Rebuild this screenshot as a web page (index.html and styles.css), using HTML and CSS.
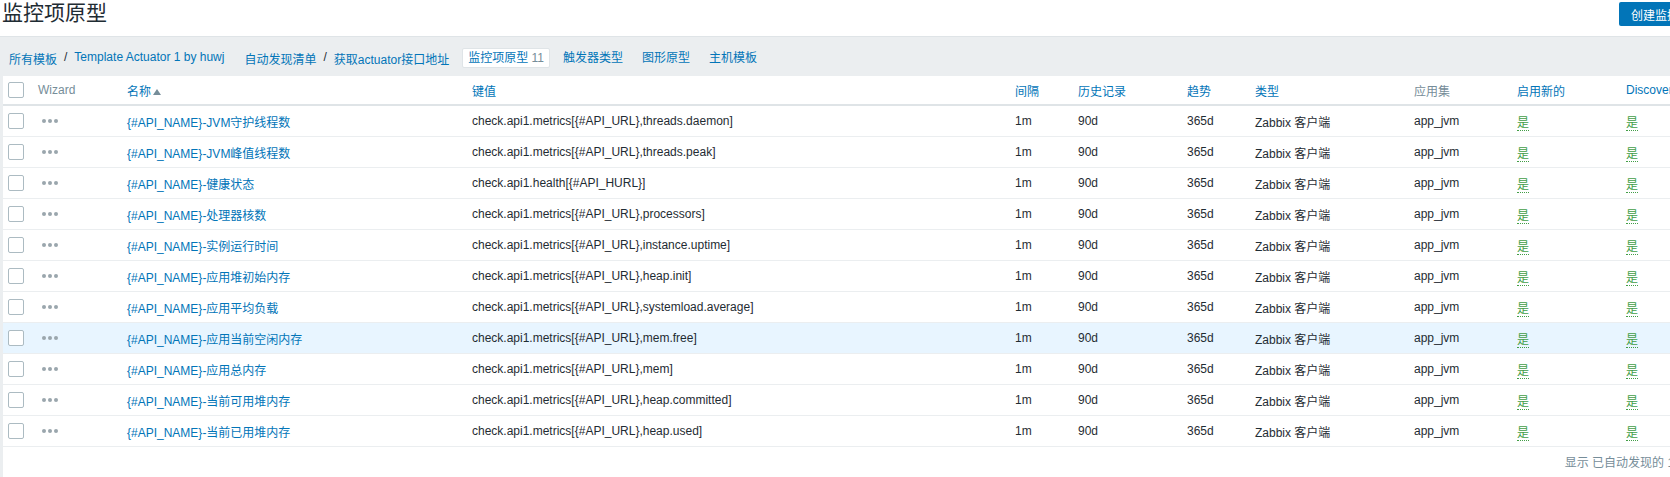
FILE: index.html
```html
<!DOCTYPE html>
<html lang="zh-CN">
  <head>
    <meta charset="utf-8" />
    <title>监控项原型</title>
    <link rel="stylesheet" href="styles.css">
  </head>
  <body>
    <div class="page">
      <div class="header">
        <h1>监控项原型</h1>
        <button class="btn-create">创建监控项原型</button>
      </div>

      <div class="content">
        <div class="nav-bar">
          <div class="crumbs">
            <a href="#">所有模板</a>
            <span class="sep">/</span>
            <a href="#">Template Actuator 1 by huwj</a>
          </div>
          <div class="crumbs">
            <a href="#">自动发现清单</a>
            <span class="sep">/</span>
            <a href="#">获取actuator接口地址</a>
          </div>
          <div class="tabs">
            <span class="tab selected">监控项原型 <span class="count">11</span></span>
            <a class="tab" href="#">触发器类型</a>
            <a class="tab" href="#">图形原型</a>
            <a class="tab" href="#">主机模板</a>
          </div>
        </div>

        <div class="panel">
          <table class="list">
            <colgroup>
              <col style="width: 30px">
              <col style="width: 89px">
              <col style="width: 345px">
              <col style="width: 543px">
              <col style="width: 63px">
              <col style="width: 109px">
              <col style="width: 68px">
              <col style="width: 159px">
              <col style="width: 103px">
              <col style="width: 109px">
              <col style="width: 120px">
            </colgroup>
            <thead>
              <tr>
                <th><span class="checkbox"></span></th>
                <th class="plain">Wizard</th>
                <th><a href="#">名称</a><span class="arrow-up"></span></th>
                <th><a href="#">键值</a></th>
                <th><a href="#">间隔</a></th>
                <th><a href="#">历史记录</a></th>
                <th><a href="#">趋势</a></th>
                <th><a href="#">类型</a></th>
                <th class="plain">应用集</th>
                <th><a href="#">启用新的</a></th>
                <th><a href="#">Discover</a></th>
              </tr>
            </thead>
            <tbody>
              <tr>
                <td><span class="checkbox"></span></td>
                <td><span class="dots"><i></i><i></i><i></i></span></td>
                <td><a href="#">{#API_NAME}-JVM守护线程数</a></td>
                <td>check.api1.metrics[{#API_URL},threads.daemon]</td>
                <td>1m</td><td>90d</td><td>365d</td><td>Zabbix 客户端</td><td>app_jvm</td>
                <td><a class="yes" href="#">是</a></td><td><a class="yes" href="#">是</a></td>
              </tr>
              <tr>
                <td><span class="checkbox"></span></td>
                <td><span class="dots"><i></i><i></i><i></i></span></td>
                <td><a href="#">{#API_NAME}-JVM峰值线程数</a></td>
                <td>check.api1.metrics[{#API_URL},threads.peak]</td>
                <td>1m</td><td>90d</td><td>365d</td><td>Zabbix 客户端</td><td>app_jvm</td>
                <td><a class="yes" href="#">是</a></td><td><a class="yes" href="#">是</a></td>
              </tr>
              <tr>
                <td><span class="checkbox"></span></td>
                <td><span class="dots"><i></i><i></i><i></i></span></td>
                <td><a href="#">{#API_NAME}-健康状态</a></td>
                <td>check.api1.health[{#API_HURL}]</td>
                <td>1m</td><td>90d</td><td>365d</td><td>Zabbix 客户端</td><td>app_jvm</td>
                <td><a class="yes" href="#">是</a></td><td><a class="yes" href="#">是</a></td>
              </tr>
              <tr>
                <td><span class="checkbox"></span></td>
                <td><span class="dots"><i></i><i></i><i></i></span></td>
                <td><a href="#">{#API_NAME}-处理器核数</a></td>
                <td>check.api1.metrics[{#API_URL},processors]</td>
                <td>1m</td><td>90d</td><td>365d</td><td>Zabbix 客户端</td><td>app_jvm</td>
                <td><a class="yes" href="#">是</a></td><td><a class="yes" href="#">是</a></td>
              </tr>
              <tr>
                <td><span class="checkbox"></span></td>
                <td><span class="dots"><i></i><i></i><i></i></span></td>
                <td><a href="#">{#API_NAME}-实例运行时间</a></td>
                <td>check.api1.metrics[{#API_URL},instance.uptime]</td>
                <td>1m</td><td>90d</td><td>365d</td><td>Zabbix 客户端</td><td>app_jvm</td>
                <td><a class="yes" href="#">是</a></td><td><a class="yes" href="#">是</a></td>
              </tr>
              <tr>
                <td><span class="checkbox"></span></td>
                <td><span class="dots"><i></i><i></i><i></i></span></td>
                <td><a href="#">{#API_NAME}-应用堆初始内存</a></td>
                <td>check.api1.metrics[{#API_URL},heap.init]</td>
                <td>1m</td><td>90d</td><td>365d</td><td>Zabbix 客户端</td><td>app_jvm</td>
                <td><a class="yes" href="#">是</a></td><td><a class="yes" href="#">是</a></td>
              </tr>
              <tr>
                <td><span class="checkbox"></span></td>
                <td><span class="dots"><i></i><i></i><i></i></span></td>
                <td><a href="#">{#API_NAME}-应用平均负载</a></td>
                <td>check.api1.metrics[{#API_URL},systemload.average]</td>
                <td>1m</td><td>90d</td><td>365d</td><td>Zabbix 客户端</td><td>app_jvm</td>
                <td><a class="yes" href="#">是</a></td><td><a class="yes" href="#">是</a></td>
              </tr>
              <tr class="hover">
                <td><span class="checkbox"></span></td>
                <td><span class="dots"><i></i><i></i><i></i></span></td>
                <td><a href="#">{#API_NAME}-应用当前空闲内存</a></td>
                <td>check.api1.metrics[{#API_URL},mem.free]</td>
                <td>1m</td><td>90d</td><td>365d</td><td>Zabbix 客户端</td><td>app_jvm</td>
                <td><a class="yes" href="#">是</a></td><td><a class="yes" href="#">是</a></td>
              </tr>
              <tr>
                <td><span class="checkbox"></span></td>
                <td><span class="dots"><i></i><i></i><i></i></span></td>
                <td><a href="#">{#API_NAME}-应用总内存</a></td>
                <td>check.api1.metrics[{#API_URL},mem]</td>
                <td>1m</td><td>90d</td><td>365d</td><td>Zabbix 客户端</td><td>app_jvm</td>
                <td><a class="yes" href="#">是</a></td><td><a class="yes" href="#">是</a></td>
              </tr>
              <tr>
                <td><span class="checkbox"></span></td>
                <td><span class="dots"><i></i><i></i><i></i></span></td>
                <td><a href="#">{#API_NAME}-当前可用堆内存</a></td>
                <td>check.api1.metrics[{#API_URL},heap.committed]</td>
                <td>1m</td><td>90d</td><td>365d</td><td>Zabbix 客户端</td><td>app_jvm</td>
                <td><a class="yes" href="#">是</a></td><td><a class="yes" href="#">是</a></td>
              </tr>
              <tr>
                <td><span class="checkbox"></span></td>
                <td><span class="dots"><i></i><i></i><i></i></span></td>
                <td><a href="#">{#API_NAME}-当前已用堆内存</a></td>
                <td>check.api1.metrics[{#API_URL},heap.used]</td>
                <td>1m</td><td>90d</td><td>365d</td><td>Zabbix 客户端</td><td>app_jvm</td>
                <td><a class="yes" href="#">是</a></td><td><a class="yes" href="#">是</a></td>
              </tr>
            </tbody>
          </table>
          <div class="paging">显示 已自动发现的 11 中的 11</div>
        </div>
      </div>
    </div>
  </body>
</html>
```

FILE: styles.css
```css
html,
body {
  margin: 0;
  overflow: hidden;
}

body {
  font-family: "Liberation Sans", Arial, "Noto Sans CJK SC", sans-serif;
  font-size: 12px;
  color: #1f2c33;
  background-color: #fff;
}

a {
  color: #0275b8;
  text-decoration: none;
}

.page {
  width: 1741px;
}

.header {
  display: flex;
  justify-content: space-between;
  align-items: flex-start;
  height: 36px;
  padding: 0 14px 0 2px;
}

.header h1 {
  margin: 0;
  font-size: 21px;
  font-weight: normal;
  line-height: 26px;
}

.btn-create {
  margin-top: 2px;
  height: 24px;
  padding: 0 12px;
  border: none;
  border-radius: 2px;
  background-color: #0275b8;
  color: #fff;
  font-family: inherit;
  font-size: 12px;
}

.content {
  background-color: #ebeef0;
  border-top: 1px solid #dfe4e7;
  padding-left: 3px;
}

.nav-bar {
  display: flex;
  align-items: center;
  gap: 20px;
  height: 36px;
  padding: 3px 0 0 9px;
  margin-left: -3px;
}

.crumbs {
  display: flex;
  gap: 7px;
}

.crumbs .sep {
  color: #1f2c33;
}

.tabs {
  display: flex;
  gap: 7px;
  margin-left: -7px;
}

.tab {
  padding: 3px 6px;
  line-height: 14px;
}

.tab.selected {
  background-color: #fff;
  border: 1px solid #dfe4e7;
  border-radius: 2px;
  padding: 2px 5px;
  color: #0275b8;
}

.tab .count {
  color: #768d99;
}

.panel {
  background-color: #fff;
}

.list {
  width: 1738px;
  table-layout: fixed;
  border-collapse: collapse;
}

.list th,
.list td {
  padding: 0 5px;
  text-align: left;
  white-space: nowrap;
  overflow: hidden;
}

.list th {
  height: 28px;
  font-weight: normal;
  border-bottom: 2px solid #dfe4e7;
}

.list th.plain {
  color: #768d99;
}

.list td {
  height: 30px;
  border-bottom: 1px solid #ebeef0;
}

.list tr.hover td {
  background-color: #e8f5ff;
}

.checkbox {
  display: block;
  width: 14px;
  height: 14px;
  border: 1px solid #acbbc2;
  border-radius: 2px;
  background-color: #fff;
}

.arrow-up {
  display: inline-block;
  margin-left: 2px;
  border-left: 4px solid transparent;
  border-right: 4px solid transparent;
  border-bottom: 6px solid #768d99;
  vertical-align: 1px;
}

.dots {
  display: flex;
  gap: 2px;
  margin-left: 4px;
}

.dots i {
  width: 4px;
  height: 4px;
  border-radius: 50%;
  background-color: #9aa6ad;
}

.yes {
  color: #429e47;
  border-bottom: 1px dotted #429e47;
}

.paging {
  padding: 9px 18px 12px 0;
  line-height: 14px;
  text-align: right;
  color: #768d99;
}
```
